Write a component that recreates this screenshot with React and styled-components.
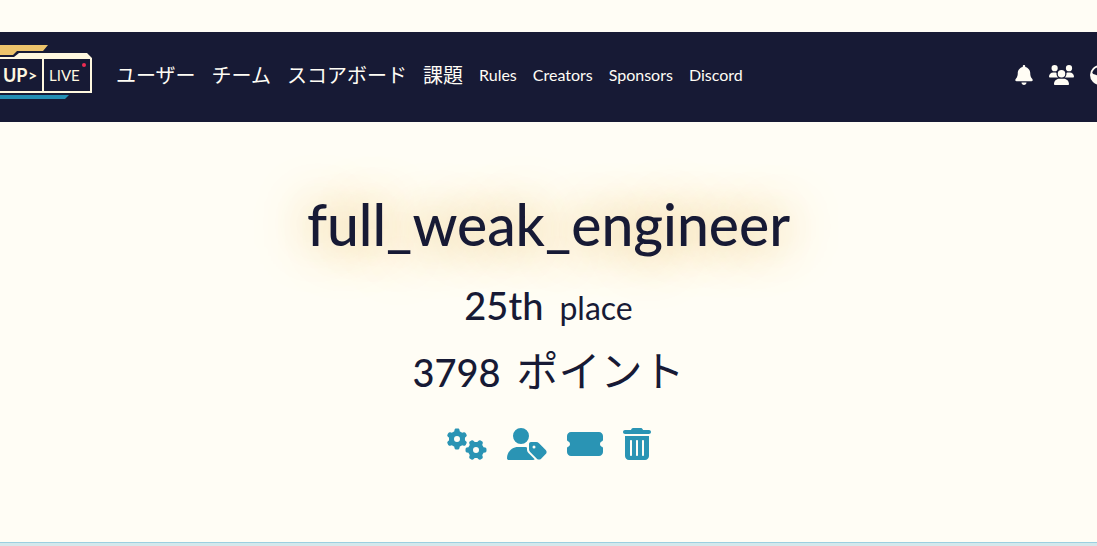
import React from "react";
import styled, { createGlobalStyle } from "styled-components";
import {
  FaBell,
  FaUsers,
  FaEarthAmericas,
  FaGears,
  FaUserTag,
  FaTicketSimple,
  FaTrashCan,
} from "react-icons/fa6";

const navy = "#171a35";
const cream = "#fffdf5";
const teal = "#2a94b4";

const GlobalStyle = createGlobalStyle`
  * { box-sizing: border-box; }
  body {
    margin: 0;
    background: ${cream};
    color: ${navy};
    font-family: Lato, "Noto Sans CJK JP", sans-serif;
    overflow-x: hidden;
  }
`;

const Page = styled.div`
  padding-top: 32px;
`;

const Navbar = styled.nav`
  display: flex;
  align-items: center;
  height: 90px;
  padding-bottom: 4px;
  background: ${navy};
  overflow: hidden;
`;

const Brand = styled.a`
  display: flex;
  flex: none;
  margin: 0 24px 6px 0;
`;

const NavList = styled.ul`
  display: flex;
  flex: 1;
  align-items: center;
  gap: 16px;
  margin: 0;
  padding: 0;
  list-style: none;
  white-space: nowrap;
`;

const NavLink = styled.a`
  color: ${cream};
  font-size: ${(p) => (p.$latin ? 16 : 20)}px;
  line-height: 30px;
  text-decoration: none;
`;

const NavTools = styled.div`
  display: flex;
  flex: none;
  gap: 16px;
  margin-right: -13px;
`;

const ToolLink = styled.a`
  display: flex;
  color: ${cream};
  svg { height: 20px; width: ${(p) => p.$width}px; }
`;

const Hero = styled.header`
  display: flex;
  flex-direction: column;
  align-items: center;
  padding: 54px 16px 82px;
`;

const TeamName = styled.h1`
  margin: 0;
  font-size: 57px;
  font-weight: 500;
  line-height: 96px;
  text-shadow: 0 0 50px #dca838;
`;

const Stat = styled.h2`
  display: flex;
  align-items: baseline;
  gap: 16px;
  margin: 0;
  font-size: 38px;
  font-weight: 500;
  line-height: 66px;
  height: 66px;
`;

const Small = styled.small`
  font-size: ${(p) => p.$size}px;
  font-weight: 400;
`;

const Actions = styled.div`
  display: flex;
  gap: 20px;
  margin-top: 24px;
`;

const Action = styled.button`
  display: flex;
  padding: 0;
  border: 0;
  background: none;
  color: ${teal};
  cursor: pointer;
  svg { height: 32px; width: ${(p) => p.$width}px; }
`;

const Panel = styled.main`
  border-top: 1px solid #9ccfe0;
  padding-top: 3px;
  background: #d4e8ec;
`;

const LogoText = styled.text`
  fill: #fff8e0;
  font-size: ${(p) => p.$size}px;
  font-weight: ${(p) => p.$weight || 400};
`;

function Logo() {
  return (
    <svg width="92" height="56" viewBox="0 0 92 56" aria-hidden="true">
      <path d="M0 1H48L43 7H17L13 11H0Z" fill="#edc36b" />
      <path d="M0 13H14L19 9H87L92 14V49H0V47H90V15H0Z" fill="#fff8e0" />
      <path d="M42 15H44V48H42Z" fill="#fff8e0" />
      <path d="M0 51H69L65 55H0Z" fill="#238fb5" />
      <LogoText x="3" y="38" $size="18" $weight={700}>UP</LogoText>
      <LogoText x="28" y="37" $size="16" $weight={700}>&gt;</LogoText>
      <LogoText x="49" y="37" $size="15">LIVE</LogoText>
      <circle cx="84" cy="21" r="2" fill="#ee2b52" />
    </svg>
  );
}

const links = ["ユーザー", "チーム", "スコアボード", "課題", "Rules", "Creators", "Sponsors", "Discord"];

export default function App() {
  return (
    <>
      <GlobalStyle />
      <Page>
        <Navbar>
          <Brand href="#" aria-label="Home"><Logo /></Brand>
          <NavList>
            {links.map((l) => (
              <li key={l}><NavLink href="#" $latin={/^[A-Z]/.test(l)}>{l}</NavLink></li>
            ))}
          </NavList>
          <NavTools>
            <ToolLink $width={18} href="#" aria-label="Notifications"><FaBell /></ToolLink>
            <ToolLink $width={25} href="#" aria-label="Team"><FaUsers /></ToolLink>
            <ToolLink $width={20} href="#" aria-label="Language"><FaEarthAmericas /></ToolLink>
          </NavTools>
        </Navbar>
        <Hero>
          <TeamName>full_weak_engineer</TeamName>
          <Stat>25th <Small $size={32}>place</Small></Stat>
          <Stat>3798 <Small $size={42}>ポイント</Small></Stat>
          <Actions>
            <Action $width={40} aria-label="Edit team"><FaGears /></Action>
            <Action $width={40} aria-label="Choose captain"><FaUserTag /></Action>
            <Action $width={36} aria-label="Invite members"><FaTicketSimple /></Action>
            <Action $width={28} aria-label="Disband team"><FaTrashCan /></Action>
          </Actions>
        </Hero>
        <Panel />
      </Page>
    </>
  );
}
